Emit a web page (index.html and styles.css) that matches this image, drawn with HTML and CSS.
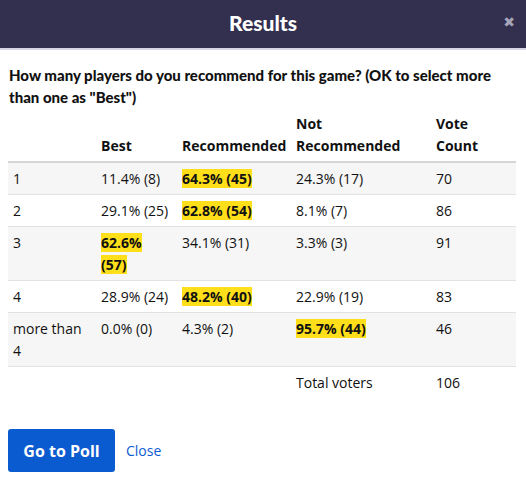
FILE: index.html
```html
<!DOCTYPE html>
<html>
<head>
<meta charset="utf-8">
<link rel="stylesheet" href="styles.css">
</head>
<body>
<div class="modal">
  <div class="modal-header">
    <h1 class="title">Results</h1>
    <span class="close-x">&#x2716;</span>
  </div>
  <div class="modal-body">
    <p class="question">How many players do you recommend for this game? (OK to select more than one as "Best")</p>
    <table class="results">
      <colgroup>
        <col class="c1"><col class="c2"><col class="c3"><col class="c4"><col class="c5">
      </colgroup>
      <thead>
        <tr><th></th><th>Best</th><th>Recommended</th><th>Not Recommended</th><th>Vote Count</th></tr>
      </thead>
      <tbody>
        <tr class="odd"><td>1</td><td>11.4% (8)</td><td><span class="hl">64.3% (45)</span></td><td>24.3% (17)</td><td>70</td></tr>
        <tr><td>2</td><td>29.1% (25)</td><td><span class="hl">62.8% (54)</span></td><td>8.1% (7)</td><td>86</td></tr>
        <tr class="odd"><td>3</td><td><span class="hl">62.6% (57)</span></td><td>34.1% (31)</td><td>3.3% (3)</td><td>91</td></tr>
        <tr><td>4</td><td>28.9% (24)</td><td><span class="hl">48.2% (40)</span></td><td>22.9% (19)</td><td>83</td></tr>
        <tr class="odd"><td>more than 4</td><td>0.0% (0)</td><td>4.3% (2)</td><td><span class="hl">95.7% (44)</span></td><td>46</td></tr>
        <tr class="total"><td></td><td></td><td></td><td>Total voters</td><td>106</td></tr>
      </tbody>
    </table>
    <div class="actions">
      <button class="btn-primary">Go to Poll</button>
      <a class="link" href="#">Close</a>
    </div>
  </div>
</div>
</body>
</html>
```
FILE: styles.css
```css
html, body {
  margin: 0;
  padding: 0;
  background: #fff;
}
body {
  font-family: "Open Sans", "Liberation Sans", sans-serif;
  color: #111;
  width: 526px;
}
.modal-header {
  height: 48px;
  background: #322f4f;
  border-bottom: 2px solid #d8d6e6;
  display: flex;
  align-items: center;
  justify-content: center;
  position: relative;
}
.title {
  margin: 0 0 4px 0;
  color: #fff;
  font-family: "Lato", "Open Sans", sans-serif;
  font-size: 21px;
  font-weight: 900;
  line-height: 1;
}
.close-x {
  position: absolute;
  right: 11px;
  top: 14px;
  color: #a6a5b8;
  font-size: 14px;
  font-family: "DejaVu Sans", sans-serif;
}
.modal-body {
  padding: 14px 10px 0 8px;
}
.question {
  margin: 0 0 0 1px;
  font-family: "Lato", "Open Sans", sans-serif;
  font-size: 15px;
  font-weight: 900;
  line-height: 22px;
}
.results {
  margin-top: 0;
  width: 508px;
  border-collapse: collapse;
  table-layout: fixed;
  font-size: 14px;
}
.c1 { width: 88px; }
.c2 { width: 81px; }
.c3 { width: 114px; }
.c4 { width: 140px; }
.c5 { width: 85px; }
.results th {
  text-align: left;
  vertical-align: bottom;
  font-weight: 700;
  line-height: 22px;
  padding: 5px 5px 4px 5px;
  border-bottom: 2px solid #d5d5d5;
}
.results td {
  vertical-align: top;
  line-height: 22px;
  padding: 5px 8px 4px 5px;
  border-bottom: 1px solid #e2e2e2;
}
.results tr.odd td {
  background: #f6f6f6;
}
.results tr.total td {
  border-bottom: none;
  background: #fff;
}
.hl {
  background: #ffdf1a;
  font-weight: 700;
}
.actions {
  margin-top: 31px;
  display: flex;
  align-items: center;
  gap: 11px;
}
.btn-primary {
  width: 107px;
  height: 43px;
  border: none;
  border-radius: 3px;
  background: #0b5bd0;
  color: #fff;
  font-family: inherit;
  font-size: 16px;
  font-weight: 700;
  padding: 0;
}
.link {
  color: #0b5bd0;
  text-decoration: none;
  font-size: 14px;
}
```
